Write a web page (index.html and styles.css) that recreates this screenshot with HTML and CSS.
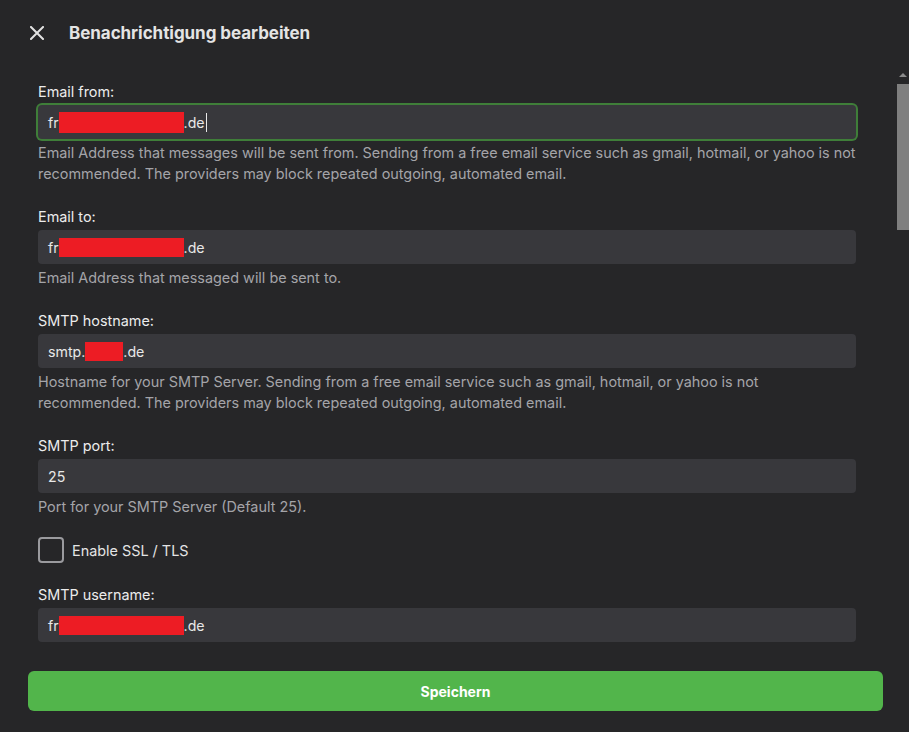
FILE: index.html
```html
<!DOCTYPE html>
<html lang="de">
<head>
<meta charset="utf-8">
<title>Benachrichtigung bearbeiten</title>
<link rel="stylesheet" href="styles.css">
</head>
<body>
<div class="dialog">
  <header class="header">
    <button class="close" aria-label="Schließen">
      <svg width="14" height="14" viewBox="0 0 14 14"><path d="M1 1 L13 13 M13 1 L1 13" stroke="#e2e2e2" stroke-width="2" stroke-linecap="square" fill="none"/></svg>
    </button>
    <h1 class="title">Benachrichtigung bearbeiten</h1>
  </header>
  <div class="scroll">
    <div class="content">
      <div class="field">
        <label class="label">Email from:</label>
        <div class="input focused">fr<span class="redact r-long r-21"></span>.de<span class="caret"></span></div>
        <p class="help">Email Address that messages will be sent from. Sending from a free email service such as gmail, hotmail, or yahoo is not recommended. The providers may block repeated outgoing, automated email.</p>
      </div>
      <div class="field">
        <label class="label">Email to:</label>
        <div class="input">fr<span class="redact r-long"></span>.de</div>
        <p class="help">Email Address that messaged will be sent to.</p>
      </div>
      <div class="field">
        <label class="label">SMTP hostname:</label>
        <div class="input">smtp.<span class="redact r-short"></span>.de</div>
        <p class="help">Hostname for your SMTP Server. Sending from a free email service such as gmail, hotmail, or yahoo is not recommended. The providers may block repeated outgoing, automated email.</p>
      </div>
      <div class="field">
        <label class="label">SMTP port:</label>
        <div class="input">25</div>
        <p class="help">Port for your SMTP Server (Default 25).</p>
      </div>
      <div class="check-row">
        <span class="checkbox"></span>
        <span class="check-label">Enable SSL / TLS</span>
      </div>
      <div class="field">
        <label class="label">SMTP username:</label>
        <div class="input">fr<span class="redact r-long"></span>.de</div>
      </div>
    </div>
    <div class="scrollbar">
      <div class="sb-arrow"></div>
      <div class="sb-thumb"></div>
    </div>
  </div>
  <footer class="footer">
    <button class="save">Speichern</button>
  </footer>
</div>
</body>
</html>
```
FILE: styles.css
```css
* { box-sizing: border-box; }
html, body {
  margin: 0;
  padding: 0;
  background: #262628;
  font-family: Inter, "Noto Sans", "Liberation Sans", sans-serif;
  color: #e6e6e6;
}
.dialog {
  width: 909px;
  height: 732px;
  display: flex;
  flex-direction: column;
  overflow: hidden;
}
.header {
  height: 66px;
  flex: none;
  display: flex;
  align-items: center;
  padding-left: 30px;
}
.close {
  width: 14px;
  height: 14px;
  padding: 0;
  margin: 0;
  border: 0;
  background: none;
  display: flex;
}
.title {
  margin: 0 0 0 25px;
  font-size: 17px;
  font-weight: 700;
  color: #e4e4e4;
  letter-spacing: -0.05px;
}
.scroll {
  height: 589px;
  flex: none;
  display: flex;
  overflow: hidden;
}
.content {
  flex: 1;
  padding: 16px 41px 0 38px;
}
.field { margin-bottom: 23px; }
.label {
  display: block;
  font-size: 14.4px;
  line-height: 20px;
  font-weight: 400;
  color: #ececec;
  margin-bottom: 3px;
}
.input {
  height: 34px;
  background: #38383c;
  border-radius: 4px;
  display: flex;
  align-items: center;
  padding-left: 10px;
  font-size: 14.2px;
  color: #e8e8e8;
}
.input.focused {
  box-shadow: 0 0 0 2px #3f7e39;
}
.redact {
  display: inline-block;
  background: #ed1c24;
  height: 19px;
}
.r-21 { height: 21px; }
.r-long { width: 125px; }
.r-short { width: 38px; }
.caret {
  display: inline-block;
  width: 1px;
  height: 19px;
  background: #e8e8e8;
  margin-left: 1px;
}
.help {
  margin: 3px 0 0;
  font-size: 14.4px;
  line-height: 21px;
  color: #a4a4a8;
}
.check-row {
  display: flex;
  align-items: center;
  margin-bottom: 22px;
  margin-top: -3px;
}
.checkbox {
  width: 26px;
  height: 26px;
  border: 2px solid #9a9a9e;
  border-radius: 4px;
}
.check-label {
  margin-left: 8px;
  font-size: 14.4px;
  color: #e4e4e4;
}
.scrollbar {
  width: 12px;
  flex: none;
  display: flex;
  flex-direction: column;
  align-items: center;
}
.sb-arrow {
  margin-top: 7px;
  width: 0;
  height: 0;
  border-left: 4px solid transparent;
  border-right: 4px solid transparent;
  border-bottom: 4px solid #8a8a8a;
  margin-bottom: 7px;
}
.sb-thumb {
  width: 12px;
  height: 146px;
  background: #7f7f7f;
}
.footer {
  flex: 1;
  padding: 16px 26px 21px 28px;
}
.save {
  width: 100%;
  height: 40px;
  border: 0;
  border-radius: 6px;
  background: #52b54b;
  color: #ffffff;
  font-family: Inter, "Noto Sans", "Liberation Sans", sans-serif;
  font-size: 14px;
  font-weight: 700;
}
```
